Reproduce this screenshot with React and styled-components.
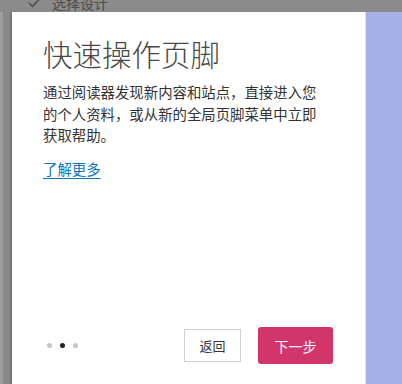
import React from 'react';
import styled, {createGlobalStyle} from 'styled-components';

const GlobalStyle = createGlobalStyle`
  html, body {
    margin: 0;
    padding: 0;
    background: #8b8b8b;
    font-family: "Noto Sans CJK SC", "Noto Sans", sans-serif;
  }
`;

const Page = styled.div`
  display: flex;
  flex-direction: column;
  width: 402px;
  height: 384px;
  overflow: hidden;
  background: #8b8b8b;
`;

const TopBar = styled.div`
  display: flex;
  align-items: flex-end;
  height: 12px;
  padding-left: 28px;
  overflow: hidden;
  color: #4b4b4b;
  font-size: 14px;
  line-height: 14px;
  flex-shrink: 0;
`;

const TopBarInner = styled.div`
  display: flex;
  align-items: center;
  gap: 12px;
  margin-bottom: 2px;
`;

const Body = styled.div`
  display: flex;
  flex: 1;
  min-height: 0;
`;

const LeftRail = styled.div`
  width: 12px;
  flex-shrink: 0;
  background: linear-gradient(to right, #9d9d9d 0 3px, #888 3px 10px, #777 10px 12px);
`;

const Card = styled.div`
  display: flex;
  flex-direction: column;
  width: 354px;
  flex-shrink: 0;
  background: #fff;
  padding: 0 32px 0 31px;
  box-sizing: border-box;
  border-right: 1px solid #e4e4ee;
`;

const Title = styled.h1`
  margin: 23px 0 0;
  font-size: 29.5px;
  font-weight: 300;
  line-height: 36px;
  color: #484848;
  letter-spacing: 0;
`;

const Description = styled.p`
  max-width: 280px;
  margin: 10px 0 0;
  font-size: 14.4px;
  line-height: 21.5px;
  color: #333;
`;

const MoreLink = styled.a`
  display: inline-block;
  margin-top: 12px;
  font-size: 14.4px;
  line-height: 21px;
  color: #0a74bd;
  text-decoration: underline;
  text-underline-offset: 3px;
  cursor: pointer;
`;

const Footer = styled.div`
  display: flex;
  align-items: center;
  margin-top: auto;
  padding-bottom: 20px;
`;

const Dots = styled.div`
  display: flex;
  gap: 8px;
  margin-left: 4px;
  flex: 1;
`;

const Dot = styled.span`
  width: 5px;
  height: 5px;
  border-radius: 50%;
  background: ${({$active}) => ($active ? '#222' : '#c4c4c4')};
`;

const Button = styled.button`
  font-family: "Noto Sans CJK SC", "Noto Sans", sans-serif;
  font-size: 13px;
  box-sizing: border-box;
  cursor: pointer;
`;

const BackButton = styled(Button)`
  width: 57px;
  height: 33px;
  background: #fff;
  border: 1px solid #cfcfcf;
  color: #333;
  margin-right: 17px;
`;

const NextButton = styled(Button)`
  width: 75px;
  height: 37px;
  background: #d1356b;
  border: none;
  border-radius: 3px;
  color: #fff;
  font-size: 14px;
`;

const Backdrop = styled.div`
  flex: 1;
  background: #a7afe9;
`;

export default function App() {
    return (
        <>
            <GlobalStyle/>
            <Page>
                <TopBar>
                    <TopBarInner>
                        <svg width="12" height="10" viewBox="0 0 12 10">
                            <path d="M1 5 L4.5 8.5 L11 1.5" fill="none" stroke="#4b4b4b" strokeWidth="1.5"/>
                        </svg>
                        <span>选择设计</span>
                    </TopBarInner>
                </TopBar>
                <Body>
                    <LeftRail/>
                    <Card>
                        <Title>快速操作页脚</Title>
                        <Description>
                            通过阅读器发现新内容和站点，直接进入您的个人资料，或从新的全局页脚菜单中立即获取帮助。
                        </Description>
                        <div><MoreLink>了解更多</MoreLink></div>
                        <Footer>
                            <Dots>
                                <Dot/>
                                <Dot $active/>
                                <Dot/>
                            </Dots>
                            <BackButton>返回</BackButton>
                            <NextButton>下一步</NextButton>
                        </Footer>
                    </Card>
                    <Backdrop/>
                </Body>
            </Page>
        </>
    );
}
